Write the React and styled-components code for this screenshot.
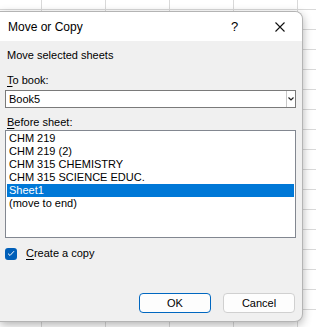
import React from 'react';
import styled, { createGlobalStyle } from 'styled-components';

const GlobalStyle = createGlobalStyle`
  html, body {
    margin: 0;
    padding: 0;
    overflow: hidden;
  }

  body {
    font-family: 'Liberation Sans', Arial, sans-serif;
    font-size: 11px;
    color: #000;
  }
`;

const StyledSheet = styled.div`
  width: 316px;
  height: 327px;
  box-sizing: border-box;
  padding: 11px 13px 0 0;
  background-color: #fff;
  background-image: linear-gradient(to right, #d9d9d9 1px, transparent 1px),
    linear-gradient(to bottom, #d9d9d9 1px, transparent 1px);
  background-size: 64px 20px;
  background-position: 41px 9px;
`;

const Dialog = styled.div`
  width: 303px;
  height: 311px;
  box-sizing: border-box;
  display: flex;
  flex-direction: column;
  border: 1px solid #b4b4b4;
  border-left: none;
  border-radius: 0 8px 8px 0;
  background: #f0f0f0;
  overflow: hidden;
  box-shadow: 0 3px 10px rgba(0, 0, 0, 0.3);
`;

const TitleBar = styled.div`
  height: 29px;
  display: flex;
  align-items: center;
  padding-left: 8px;
  background: #fff;
  font-size: 12px;
`;

const Title = styled.span`
  flex: 1;
`;

const TitleButton = styled.span`
  width: 45px;
  display: flex;
  justify-content: center;
  align-items: center;
  font-size: 13px;
`;

const Body = styled.div`
  flex: 1;
  display: flex;
  flex-direction: column;
  padding: 0 6px 8px 5px;
`;

const Label = styled.div`
  line-height: 15px;
  padding-left: 2px;
  margin-top: ${({ $top }) => $top}px;
`;

const Key = styled.span`
  text-decoration: underline;
  text-underline-offset: 2px;
`;

const Select = styled.div`
  margin-top: 2px;
  height: 18px;
  box-sizing: border-box;
  display: flex;
  align-items: stretch;
  border: 1px solid #7a7a7a;
  background: #fff;
`;

const SelectValue = styled.span`
  flex: 1;
  line-height: 16px;
  padding-left: 3px;
`;

const SelectArrow = styled.span`
  width: 8px;
  border-left: 1px solid #c8c8c8;
  display: flex;
  align-items: center;
  justify-content: center;
`;

const ListBox = styled.div`
  height: 108px;
  box-sizing: border-box;
  border: 1px solid #828790;
  background: #fff;
  padding: 1px;
`;

const ListItem = styled.div`
  height: 13px;
  line-height: 13px;
  padding-left: 2px;
  background: ${({ $selected }) => ($selected ? '#0078d7' : 'transparent')};
  color: ${({ $selected }) => ($selected ? '#fff' : '#000')};
`;

const CheckRow = styled.label`
  margin-top: 9px;
  display: flex;
  align-items: center;
  gap: 9px;
  line-height: 13px;
`;

const CheckBox = styled.span`
  width: 12px;
  height: 12px;
  border-radius: 3px;
  background: #005fb8;
  display: flex;
  align-items: center;
  justify-content: center;
`;

const ButtonRow = styled.div`
  margin-top: auto;
  display: flex;
  justify-content: flex-end;
  gap: 12px;
  padding-right: 1px;
`;

const Button = styled.button`
  width: 72px;
  height: 20px;
  box-sizing: border-box;
  padding: 0;
  font: inherit;
  color: #000;
  background: #fdfdfd;
  border: 1px solid ${({ $primary }) => ($primary ? '#0067c0' : '#d0d0d0')};
  border-radius: 4px;
`;

const sheets = ['CHM 219', 'CHM 219 (2)', 'CHM 315 CHEMISTRY', 'CHM 315 SCIENCE EDUC.', 'Sheet1', '(move to end)'];

const App = () => (
  <>
    <GlobalStyle />
    <StyledSheet>
      <Dialog>
        <TitleBar>
          <Title>Move or Copy</Title>
          <TitleButton>?</TitleButton>
          <TitleButton>
            <svg width="10" height="10" viewBox="0 0 10 10">
              <path d="M0.5 0.5 L9.5 9.5 M9.5 0.5 L0.5 9.5" stroke="#111" strokeWidth="1.1" />
            </svg>
          </TitleButton>
        </TitleBar>
        <Body>
          <Label $top={7}>Move selected sheets</Label>
          <Label $top={10}>
            <Key>T</Key>o book:
          </Label>
          <Select>
            <SelectValue>Book5</SelectValue>
            <SelectArrow>
              <svg width="6" height="4" viewBox="0 0 6 4">
                <path d="M0.5 0.5 L3 3 L5.5 0.5" stroke="#222" strokeWidth="1.2" fill="none" />
              </svg>
            </SelectArrow>
          </Select>
          <Label $top={7}>
            <Key>B</Key>efore sheet:
          </Label>
          <ListBox>
            {sheets.map((name) => (
              <ListItem key={name} $selected={name === 'Sheet1'}>
                {name}
              </ListItem>
            ))}
          </ListBox>
          <CheckRow>
            <CheckBox>
              <svg width="8" height="7" viewBox="0 0 8 7">
                <path d="M1 3.6 L3 5.5 L7 1.2" stroke="#fff" strokeWidth="1" fill="none" />
              </svg>
            </CheckBox>
            <span>
              <Key>C</Key>reate a copy
            </span>
          </CheckRow>
          <ButtonRow>
            <Button $primary>OK</Button>
            <Button>Cancel</Button>
          </ButtonRow>
        </Body>
      </Dialog>
    </StyledSheet>
  </>
);

export default App;
